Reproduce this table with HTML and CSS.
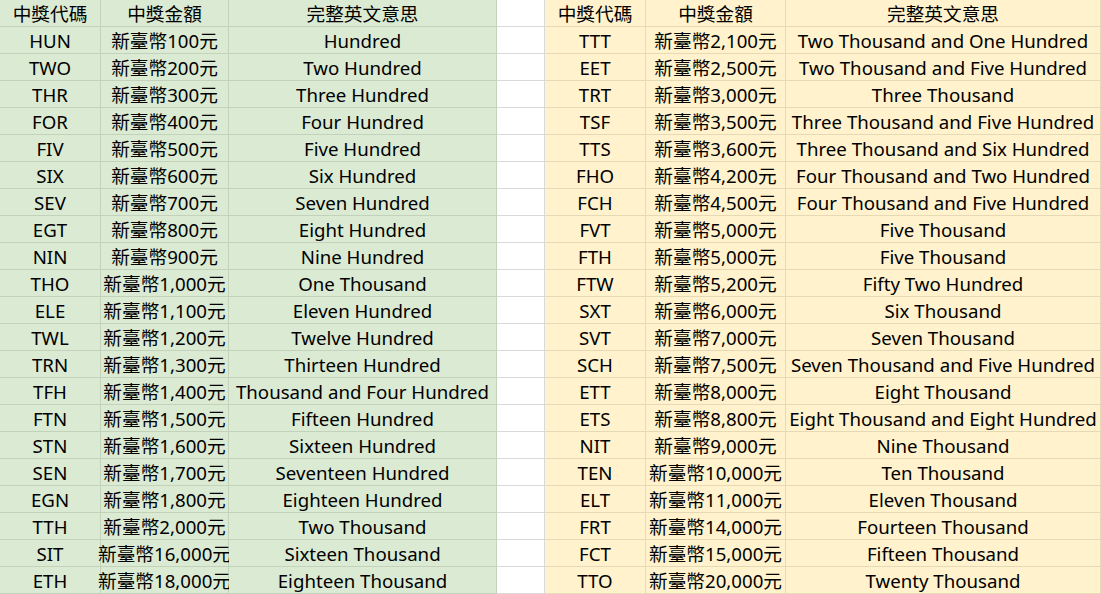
FILE: index.html
```html
<!DOCTYPE html>
<html lang="zh-Hant">
<head>
<meta charset="utf-8">
<link rel="stylesheet" href="styles.css">
</head>
<body>
<div class="sheet">
  <div class="row"><div class="c g">中獎代碼</div><div class="c g">中獎金額</div><div class="c g">完整英文意思</div><div class="c gap"></div><div class="c y">中獎代碼</div><div class="c y">中獎金額</div><div class="c y">完整英文意思</div></div>
  <div class="row"><div class="c g">HUN</div><div class="c g">新臺幣100元</div><div class="c g">Hundred</div><div class="c gap"></div><div class="c y">TTT</div><div class="c y">新臺幣2,100元</div><div class="c y">Two Thousand and One Hundred</div></div>
  <div class="row"><div class="c g">TWO</div><div class="c g">新臺幣200元</div><div class="c g">Two Hundred</div><div class="c gap"></div><div class="c y">EET</div><div class="c y">新臺幣2,500元</div><div class="c y">Two Thousand and Five Hundred</div></div>
  <div class="row"><div class="c g">THR</div><div class="c g">新臺幣300元</div><div class="c g">Three Hundred</div><div class="c gap"></div><div class="c y">TRT</div><div class="c y">新臺幣3,000元</div><div class="c y">Three Thousand</div></div>
  <div class="row"><div class="c g">FOR</div><div class="c g">新臺幣400元</div><div class="c g">Four Hundred</div><div class="c gap"></div><div class="c y">TSF</div><div class="c y">新臺幣3,500元</div><div class="c y">Three Thousand and Five Hundred</div></div>
  <div class="row"><div class="c g">FIV</div><div class="c g">新臺幣500元</div><div class="c g">Five Hundred</div><div class="c gap"></div><div class="c y">TTS</div><div class="c y">新臺幣3,600元</div><div class="c y">Three Thousand and Six Hundred</div></div>
  <div class="row"><div class="c g">SIX</div><div class="c g">新臺幣600元</div><div class="c g">Six Hundred</div><div class="c gap"></div><div class="c y">FHO</div><div class="c y">新臺幣4,200元</div><div class="c y">Four Thousand and Two Hundred</div></div>
  <div class="row"><div class="c g">SEV</div><div class="c g">新臺幣700元</div><div class="c g">Seven Hundred</div><div class="c gap"></div><div class="c y">FCH</div><div class="c y">新臺幣4,500元</div><div class="c y">Four Thousand and Five Hundred</div></div>
  <div class="row"><div class="c g">EGT</div><div class="c g">新臺幣800元</div><div class="c g">Eight Hundred</div><div class="c gap"></div><div class="c y">FVT</div><div class="c y">新臺幣5,000元</div><div class="c y">Five Thousand</div></div>
  <div class="row"><div class="c g">NIN</div><div class="c g">新臺幣900元</div><div class="c g">Nine Hundred</div><div class="c gap"></div><div class="c y">FTH</div><div class="c y">新臺幣5,000元</div><div class="c y">Five Thousand</div></div>
  <div class="row"><div class="c g">THO</div><div class="c g">新臺幣1,000元</div><div class="c g">One Thousand</div><div class="c gap"></div><div class="c y">FTW</div><div class="c y">新臺幣5,200元</div><div class="c y">Fifty Two Hundred</div></div>
  <div class="row"><div class="c g">ELE</div><div class="c g">新臺幣1,100元</div><div class="c g">Eleven Hundred</div><div class="c gap"></div><div class="c y">SXT</div><div class="c y">新臺幣6,000元</div><div class="c y">Six Thousand</div></div>
  <div class="row"><div class="c g">TWL</div><div class="c g">新臺幣1,200元</div><div class="c g">Twelve Hundred</div><div class="c gap"></div><div class="c y">SVT</div><div class="c y">新臺幣7,000元</div><div class="c y">Seven Thousand</div></div>
  <div class="row"><div class="c g">TRN</div><div class="c g">新臺幣1,300元</div><div class="c g">Thirteen Hundred</div><div class="c gap"></div><div class="c y">SCH</div><div class="c y">新臺幣7,500元</div><div class="c y">Seven Thousand and Five Hundred</div></div>
  <div class="row"><div class="c g">TFH</div><div class="c g">新臺幣1,400元</div><div class="c g">Thousand and Four Hundred</div><div class="c gap"></div><div class="c y">ETT</div><div class="c y">新臺幣8,000元</div><div class="c y">Eight Thousand</div></div>
  <div class="row"><div class="c g">FTN</div><div class="c g">新臺幣1,500元</div><div class="c g">Fifteen Hundred</div><div class="c gap"></div><div class="c y">ETS</div><div class="c y">新臺幣8,800元</div><div class="c y">Eight Thousand and Eight Hundred</div></div>
  <div class="row"><div class="c g">STN</div><div class="c g">新臺幣1,600元</div><div class="c g">Sixteen Hundred</div><div class="c gap"></div><div class="c y">NIT</div><div class="c y">新臺幣9,000元</div><div class="c y">Nine Thousand</div></div>
  <div class="row"><div class="c g">SEN</div><div class="c g">新臺幣1,700元</div><div class="c g">Seventeen Hundred</div><div class="c gap"></div><div class="c y">TEN</div><div class="c y">新臺幣10,000元</div><div class="c y">Ten Thousand</div></div>
  <div class="row"><div class="c g">EGN</div><div class="c g">新臺幣1,800元</div><div class="c g">Eighteen Hundred</div><div class="c gap"></div><div class="c y">ELT</div><div class="c y">新臺幣11,000元</div><div class="c y">Eleven Thousand</div></div>
  <div class="row"><div class="c g">TTH</div><div class="c g">新臺幣2,000元</div><div class="c g">Two Thousand</div><div class="c gap"></div><div class="c y">FRT</div><div class="c y">新臺幣14,000元</div><div class="c y">Fourteen Thousand</div></div>
  <div class="row"><div class="c g">SIT</div><div class="c g">新臺幣16,000元</div><div class="c g">Sixteen Thousand</div><div class="c gap"></div><div class="c y">FCT</div><div class="c y">新臺幣15,000元</div><div class="c y">Fifteen Thousand</div></div>
  <div class="row"><div class="c g">ETH</div><div class="c g">新臺幣18,000元</div><div class="c g">Eighteen Thousand</div><div class="c gap"></div><div class="c y">TTO</div><div class="c y">新臺幣20,000元</div><div class="c y">Twenty Thousand</div></div>
</div>
</body>
</html>
```
FILE: styles.css
```css
html, body {
  margin: 0;
  padding: 0;
  background: #ffffff;
}
.sheet {
  width: 1101px;
  font-family: "Noto Sans", "Noto Sans CJK TC", sans-serif;
  font-size: 18.67px;
  color: #000;
}
.row {
  display: grid;
  grid-template-columns: 101px 128px 268px 48px 101px 140px 315px;
  height: 27px;
}
.c {
  box-sizing: border-box;
  height: 27px;
  padding-top: 2px;
  display: flex;
  align-items: center;
  justify-content: center;
  white-space: nowrap;
  line-height: 1;
  border-right: 1px solid;
  border-bottom: 1px solid;
}
.g {
  background: #dbead3;
  border-color: #c3d3bb;
}
.y {
  background: #fff2cc;
  border-color: #e6dab6;
}
.gap {
  background: #ffffff;
  border-color: #d9d9d9;
}
```
